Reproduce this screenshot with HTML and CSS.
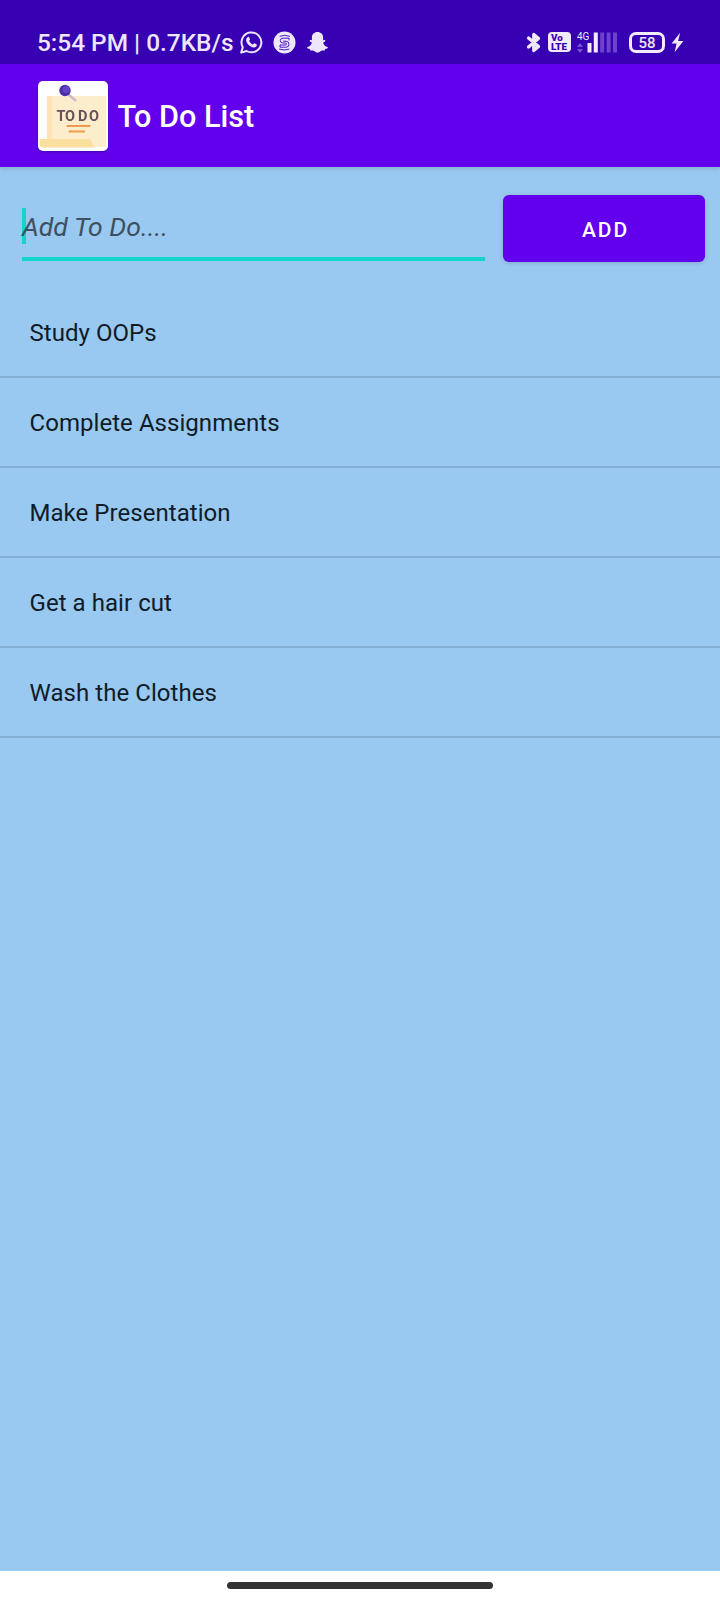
FILE: index.html
```html
<!DOCTYPE html>
<html lang="en">
<head>
<meta charset="utf-8">
<title>To Do List</title>
<link rel="stylesheet" href="styles.css">
</head>
<body>
<div class="status-bar">
  <span class="status-text">5:54 PM | 0.7KB/s</span>
  <div class="status-left">
    <svg width="23" height="23" viewBox="0 0 23 23"><path d="M1.200 21.600 2.800 16.200A9.900 9.900 0 1 1 6.600 20Z" fill="none" stroke="#eee6fc" stroke-width="2" stroke-linejoin="round"/><path d="M7.600 6.200c.6-.6 1.300-.4 1.600.2l.8 1.800c.2.600-.8 1.300-.8 1.700.4 1.300 2.100 3 3.600 3.500.5 0 1.100-1.300 1.600-1.200l2 1c.7.400.4 1.500-.1 2.200-1 1.200-2.500 1.400-4.100.8-3-1.100-5.200-3.400-6-6.100-.4-1.600.3-3 1.400-3.900z" fill="#eee6fc"/></svg>
    <svg width="23" height="23" viewBox="0 0 23 23"><circle cx="11.500" cy="11.500" r="11" fill="#eee6fc"/><path d="M7 5.200Q11.500 3.400 16.500 5.200M6.500 18.200Q11.500 19.800 16 18.200M16 9V7.200H10Q7.300 7.200 7.300 9.600T10 12H12.500Q13.500 12 13.500 13T12.500 14H7V16.200H13Q16 16.200 16 13.300T13 10.200H10.500" fill="none" stroke="#3700b3" stroke-width="0.900" stroke-linecap="round" stroke-linejoin="round"/></svg>
    <svg width="23" height="23" viewBox="0 0 23 23"><path d="M11.500 1c3.400 0 5.600 2.300 5.600 5.500v2.600c.8.200 1.900-.5 2.200.3.300 1-1.500 1.400-2.200 2.200.4 2.200 2.200 4 4.800 4.700.4.900-1.200 1.500-2.700 1.800-.4.600-.2 1.400-.8 1.500-1.100.1-2.200-.3-3.400.3-1.100.6-2 1.700-3.500 1.700s-2.400-1.100-3.500-1.700c-1.200-.6-2.300-.2-3.400-.3-.6-.1-.4-.9-.8-1.500-1.500-.3-3.100-.9-2.700-1.800 2.600-.7 4.400-2.500 4.800-4.700C5.200 10.800 3.400 10.400 3.700 9.400c.3-.8 1.400-.1 2.200-.3V6.500C5.900 3.300 8.100 1 11.500 1z" fill="#eee6fc"/></svg>
  </div>
  <div class="status-right">
    <svg width="16" height="21" viewBox="0 0 16 21"><path d="M2.500 6 12.500 14.600 7.800 18.600V2.400L12.500 6.400 2.500 15" fill="none" stroke="#f1eafd" stroke-width="3.300" stroke-linejoin="round" stroke-linecap="round"/></svg>
    <span class="volte"><b>Vo</b><b>LTE</b></span>
    <div class="signal">
      <div class="network"><span>4G</span><svg width="6" height="10" viewBox="0 0 6 10"><path d="M0 4 3 0l3 4zM0 6h6L3 10z" fill="#7955d1"/></svg></div>
      <svg width="32" height="21" viewBox="0 0 32 21"><path d="M.5 11h4v9.500h-4zM6.800.5h4v20h-4z" fill="#f3ecff"/><path d="M13.200.5h4v20h-4zM19.600.5h4v20h-4zM26 .5h4v20h-4z" fill="#6d43cc"/></svg>
    </div>
    <span class="battery">58</span>
    <svg width="13" height="21" viewBox="0 0 13 21"><path d="M9.200.8.6 11.600h5L3.600 20.200 12.400 8.900H7.100z" fill="#f1eafd"/></svg>
  </div>
</div>
<header class="app-bar">
  <svg class="logo" width="70" height="70" viewBox="0 0 70 70">
    <rect width="70" height="70" rx="5" fill="#fff"/>
    <path d="M9 15h59v51H9z" fill="#fcedcc"/><path d="M9 15h5v43H9z" fill="#fde5b3"/>
    <path d="M1.500 58H50q3 0 4 4 1 3 3.500 4.500H4Q1.500 66 1.500 62z" fill="#fbdf9f"/>
    <path d="m30 13 8 7" stroke="#cdb9c9" stroke-width="2.400"/>
    <circle cx="27" cy="9.500" r="5.700" fill="#4c2fa8"/><circle cx="28" cy="8.500" r="3.500" fill="#6544c2"/>
    <text x="18.500 27 40 51" y="40" class="logo-text">TODO</text>
    <path d="M29.500 45h22M31.500 50.500H46" stroke="#ee9c4b" stroke-width="2.200" stroke-linecap="round"/>
  </svg>
  <h1 class="title">To Do List</h1>
</header>
<main class="content">
  <div class="add-row">
    <div class="field"><span class="caret"></span><span class="hint">Add To Do....</span></div>
    <button class="add-button">ADD</button>
  </div>
  <ul class="todo-list">
    <li>Study OOPs</li>
    <li>Complete Assignments</li>
    <li>Make Presentation</li>
    <li>Get a hair cut</li>
    <li>Wash the Clothes</li>
  </ul>
</main>
<footer class="nav-bar"><span class="nav-handle"></span></footer>
</body>
</html>
```

FILE: styles.css
```css
* { box-sizing: border-box; }
body {
  margin: 0;
  width: 720px;
  height: 1600px;
  display: flex;
  flex-direction: column;
  overflow: hidden;
  font-family: Roboto, sans-serif;
  background: #99c8f0;
}
svg { display: block; flex: none; }
.status-bar {
  height: 64px;
  flex: none;
  padding: 20px 36px 0 37px;
  display: flex;
  align-items: center;
  background: #3700b3;
  color: #eee6fc;
}
.status-text {
  width: 202.5px;
  padding-top: 2px;
  font-size: 24.400px;
  font-weight: 500;
  line-height: 28px;
  white-space: nowrap;
}
.status-left { display: flex; gap: 10px; }
.status-right { margin-left: auto; display: flex; align-items: center; }
.volte {
  width: 23px;
  height: 20px;
  margin: 0 6px;
  padding: 1px 0 0 3px;
  border-radius: 4px;
  background: #f1eafd;
  color: #3700b3;
  font-size: 9.800px;
  line-height: 9px;
  display: flex;
  flex-direction: column;
}
.volte b { font-weight: 900; height: 9px; }
.signal { display: flex; width: 42px; height: 21px; margin-right: 10px; }
.network { width: 10px; height: 21px; display: flex; flex-direction: column; justify-content: space-between; }
.network span { font-size: 10px; line-height: 9px; height: 9px; white-space: nowrap; }
.battery {
  width: 36px;
  height: 21px;
  margin-right: 6px;
  border: 3px solid #f3ecff;
  border-radius: 7px;
  font-size: 15px;
  font-weight: 500;
  line-height: 16px;
  text-align: center;
}
.app-bar {
  height: 103px;
  flex: none;
  padding: 0 0 0 38px;
  display: flex;
  align-items: center;
  gap: 9.5px;
  background: #6200ee;
  color: #fff;
  box-shadow: 0 2px 4px rgba(0, 0, 0, 0.12);
}
.logo { filter: drop-shadow(0 1px 1px rgba(0, 0, 0, 0.3)); }
.logo-text { font-family: Roboto, sans-serif; font-weight: 700; font-size: 14.5px; fill: #6b5057; }
.title { margin: 0; padding-top: 3px; font-size: 30.6px; font-weight: 500; line-height: 36px; }
.content { flex: 1; }
.add-row { height: 120px; padding: 28px 14px 0 22px; display: flex; gap: 18px; }
.field {
  width: 463px;
  height: 66px;
  padding-top: 13px;
  border-bottom: 4px solid #13d5cb;
  display: flex;
}
.caret { width: 4px; height: 36px; margin-right: -4px; background: #13d5cb; }
.hint { padding-top: 1px; font-size: 26.600px; font-style: italic; line-height: 36px; color: #3d5060; position: relative; }
.add-button {
  width: 202px;
  margin-left: 0;
  height: 67px;
  padding: 2px 0 0 3px;
  border: 0;
  border-radius: 6px;
  background: #6200ee;
  color: #fff;
  font: 500 21px/24px Roboto, sans-serif;
  letter-spacing: 1.900px;
  box-shadow: 0 1px 4px rgba(0, 0, 0, 0.15);
}
.todo-list { margin: 0; padding: 1px 0 0; list-style: none; }
.todo-list li {
  height: 90px;
  padding: 0 29.5px;
  border-bottom: 2px solid #83add3;
  font-size: 24px;
  line-height: 90px;
  letter-spacing: 0.050px;
  color: #0f1c28;
}
.nav-bar { height: 29px; flex: none; padding-top: 11px; background: #fff; }
.nav-handle { display: block; width: 266px; height: 7px; margin-left: 227px; border-radius: 4px; background: #333; }
```
